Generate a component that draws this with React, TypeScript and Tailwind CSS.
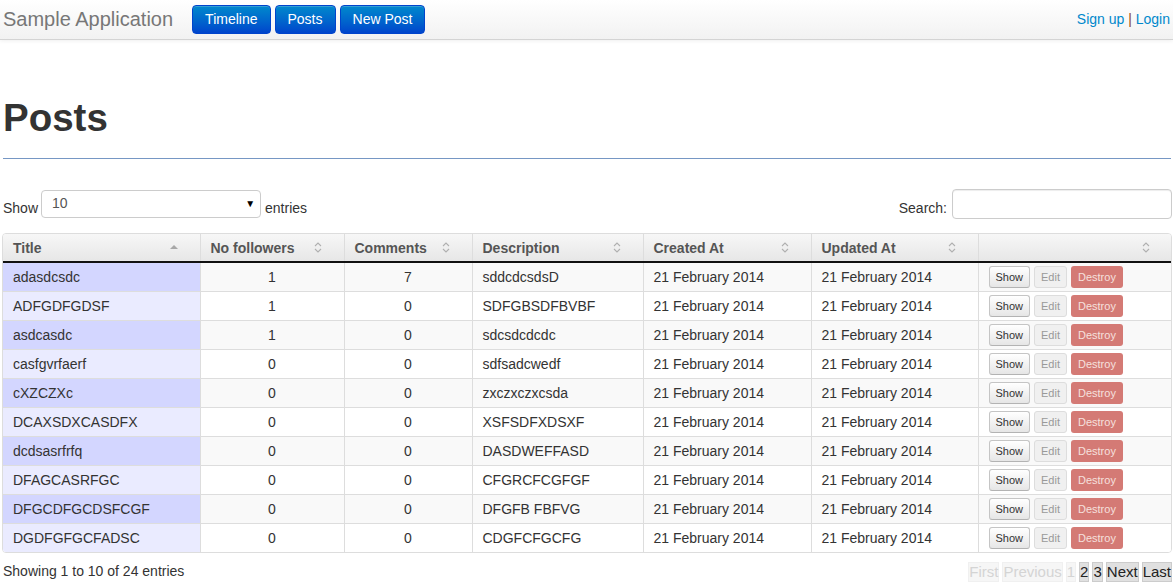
import React from "react";

const rows = [
  ["adasdcsdc", "1", "7", "sddcdcsdsD"],
  ["ADFGDFGDSF", "1", "0", "SDFGBSDFBVBF"],
  ["asdcasdc", "1", "0", "sdcsdcdcdc"],
  ["casfgvrfaerf", "0", "0", "sdfsadcwedf"],
  ["cXZCZXc", "0", "0", "zxczxczxcsda"],
  ["DCAXSDXCASDFX", "0", "0", "XSFSDFXDSXF"],
  ["dcdsasrfrfq", "0", "0", "DASDWEFFASD"],
  ["DFAGCASRFGC", "0", "0", "CFGRCFCGFGF"],
  ["DFGCDFGCDSFCGF", "0", "0", "DFGFB FBFVG"],
  ["DGDFGFGCFADSC", "0", "0", "CDGFCFGCFG"],
];

function SortBoth() {
  return (
    <svg width="8" height="12" viewBox="0 0 8 12" className="inline-block">
      <path d="M1 5 L4 2 L7 5" fill="none" stroke="#b0b0b0" strokeWidth="1.1" />
      <path d="M1 8 L4 11 L7 8" fill="none" stroke="#b0b0b0" strokeWidth="1.1" />
    </svg>
  );
}

function SortAsc() {
  return (
    <svg width="8" height="6" viewBox="0 0 8 6" className="inline-block">
      <path d="M0 5 L4 1 L8 5 Z" fill="#a8a8a8" />
    </svg>
  );
}

const headers = [
  { label: "Title", w: "w-[197px]", asc: true },
  { label: "No followers", w: "w-[144px]" },
  { label: "Comments", w: "w-[128px]" },
  { label: "Description", w: "w-[171px]" },
  { label: "Created At", w: "w-[168px]" },
  { label: "Updated At", w: "w-[167px]" },
  { label: "", w: "w-[194px]" },
];

export default function App() {
  return (
    <div className="w-[1173px] h-[583px] overflow-hidden bg-white text-[#333] font-['Liberation_Sans',Arial,sans-serif] text-[14px] leading-[20px]">
      {/* Navbar */}
      <div className="h-[40px] flex items-center bg-gradient-to-b from-white to-[#f2f2f2] border-b border-[#d4d4d4] shadow-[0_1px_4px_rgba(0,0,0,0.065)] pl-[3px] pr-[3px]">
        <div className="text-[20px] text-[#777] leading-[20px] mr-[19px] -mt-[1px]">Sample Application</div>
        <div className="flex gap-[4px]">
          {["Timeline", "Posts", "New Post"].map((t) => (
            <div
              key={t}
              className="h-[29px] px-[12px] flex items-center rounded-[4px] text-white text-[14px] bg-gradient-to-b from-[#0088cc] to-[#0044cc] border border-[#0044cc] shadow-[inset_0_1px_0_rgba(255,255,255,0.2)] -mt-[1px]"
            >
              {t}
            </div>
          ))}
        </div>
        <div className="ml-auto text-[14px] text-[#0088cc] -mt-[1px]">
          Sign up <span className="text-[#8a4a1a]">|</span> Login
        </div>
      </div>

      <div className="px-[2px]">
        <h1 className="text-[38.5px] font-bold leading-[40px] text-[#333] mt-[58px] ml-[1px]">Posts</h1>
        <div className="mt-[20px] ml-[1px] h-px bg-[#7697c4]" />

        {/* controls */}
        <div className="flex items-center justify-between mt-[30px]">
          <div className="flex items-center ml-[1px]">
            <span className="mt-[8px]">Show</span>
            <div className="ml-[3px] w-[220px] h-[28px] border border-[#ccc] rounded-[4px] bg-white flex items-center pl-[10px] pr-[5px] text-[14px] text-[#555]">
              <span className="-mt-[2px]">10</span>
              <span className="ml-auto text-[10px] text-black">▼</span>
            </div>
            <span className="ml-[4px] mt-[8px]">entries</span>
          </div>
          <div className="flex items-center">
            <span className="mt-[8px] mr-[5px]">Search:</span>
            <div className="w-[220px] h-[30px] mr-[-1px] border border-[#ccc] rounded-[4px] bg-white shadow-[inset_0_1px_1px_rgba(0,0,0,0.075)]" />
          </div>
        </div>

        {/* table */}
        <div className="mt-[14px] w-[1170px] border border-[#ddd] rounded-[4px] overflow-hidden">
          <table className="w-full border-collapse table-fixed">
            <thead>
              <tr className="bg-gradient-to-b from-[#f7f7f7] to-[#e6e6e6]">
                {headers.map((h, i) => (
                  <th
                    key={i}
                    className={`${h.w} h-[28px] text-left font-bold text-[#555] px-[10px] border-b-2 border-b-[#111] ${i > 0 ? "border-l border-l-[#ddd]" : ""}`}
                  >
                    <div className="flex items-center justify-between pr-[12px] -mt-[1px]">
                      <span className="pt-[1px]">{h.label}</span>
                      {h.asc ? <SortAsc /> : <SortBoth />}
                    </div>
                  </th>
                ))}
              </tr>
            </thead>
            <tbody>
              {rows.map((r, i) => {
                const odd = i % 2 === 0;
                const rowBg = odd ? "bg-[#f9f9f9]" : "bg-white";
                const first = odd ? "bg-[#d3d6ff]" : "bg-[#eaebff]";
                return (
                  <tr key={i} className={rowBg}>
                    <td className={`${first} h-[29px] px-[10px] border-t border-[#ddd]`}>{r[0]}</td>
                    <td className="px-[10px] text-center border-t border-l border-[#ddd]">{r[1]}</td>
                    <td className="px-[10px] text-center border-t border-l border-[#ddd]">{r[2]}</td>
                    <td className="px-[10px] border-t border-l border-[#ddd]">{r[3]}</td>
                    <td className="px-[10px] border-t border-l border-[#ddd]">21 February 2014</td>
                    <td className="px-[10px] border-t border-l border-[#ddd]">21 February 2014</td>
                    <td className="px-[10px] border-t border-l border-[#ddd]">
                      <div className="flex items-center gap-[4px] pt-[1px]">
                        <div className="h-[22px] px-[6px] flex items-center text-[11px] text-[#333] rounded-[3px] border border-[#c5c5c5] border-b-[#b3b3b3] bg-gradient-to-b from-white to-[#e6e6e6]">
                          Show
                        </div>
                        <div className="h-[22px] px-[6px] flex items-center text-[11px] text-[#999] rounded-[3px] border border-[#ddd] bg-[#f0f0f0]">
                          Edit
                        </div>
                        <div className="h-[22px] px-[7px] flex items-center text-[11px] text-[#f6e0de] rounded-[3px] bg-[#d47a75]">
                          Destroy
                        </div>
                      </div>
                    </td>
                  </tr>
                );
              })}
            </tbody>
          </table>
        </div>

        {/* footer */}
        <div className="flex items-start justify-between mt-[8px]">
          <div className="ml-[1px] text-[14px]">Showing 1 to 10 of 24 entries</div>
          <div className="flex items-center gap-[3px] text-[15px] leading-[18px] -mr-[1px] mt-[1px]">
            <span className="text-[#d4d4d4] bg-[#f6f6f6] border border-[#f0f0f0]">First</span>
            <span className="text-[#d4d4d4] bg-[#f6f6f6] border border-[#f0f0f0]">Previous</span>
            <span className="text-[#d4d4d4] bg-[#f6f6f6] border border-[#f0f0f0]">1</span>
            <span className="text-[#222] bg-[#e0e0e0] border border-[#ccc]">2</span>
            <span className="text-[#222] bg-[#e0e0e0] border border-[#ccc]">3</span>
            <span className="text-[#222] bg-[#e0e0e0] border border-[#ccc]">Next</span>
            <span className="text-[#222] bg-[#e0e0e0] border border-[#ccc]">Last</span>
          </div>
        </div>
      </div>
    </div>
  );
}
